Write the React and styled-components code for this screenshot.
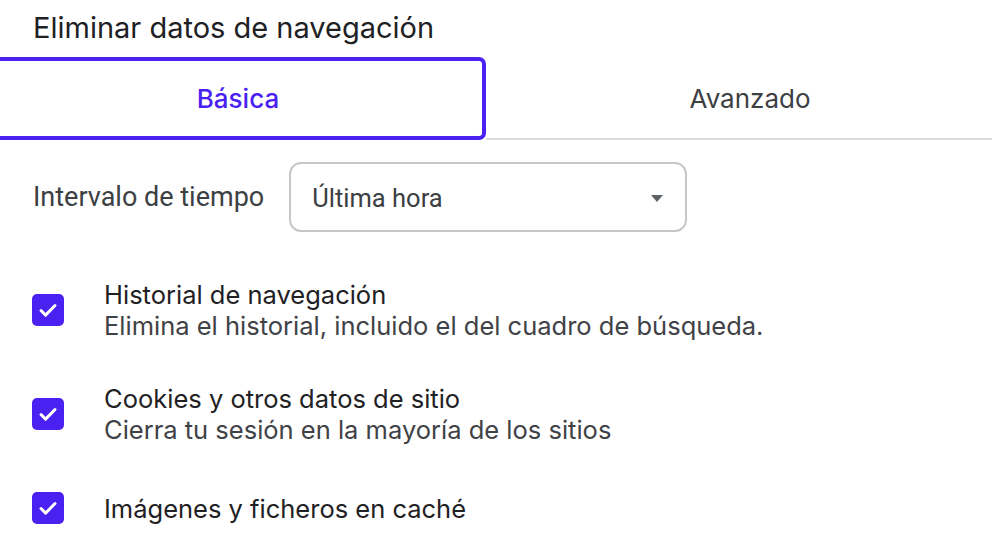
import React from "react";
import styled, { createGlobalStyle } from "styled-components";

const GlobalStyle = createGlobalStyle`
  html, body {
    margin: 0;
    padding: 0;
    background: #ffffff;
    overflow: hidden;
  }
  body {
    font-family: Inter, "Noto Sans", sans-serif;
    -webkit-font-smoothing: antialiased;
  }
`;

const Page = styled.div`
  width: 992px;
  height: 552px;
  overflow: hidden;
`;

const Title = styled.h1`
  margin: 0;
  padding: 10px 0 0 33px;
  font-size: 29px;
  line-height: 36px;
  font-weight: 400;
  color: #202124;
`;

const TabBar = styled.div`
  display: grid;
  grid-template-columns: 496px 528px;
  margin: 11px 0 0 -10px;
  height: 83px;
`;

const Tab = styled.div`
  display: flex;
  align-items: center;
  justify-content: center;
  box-sizing: border-box;
  font-size: 26px;
  line-height: 32px;
  font-weight: ${(p) => (p.active ? 500 : 400)};
  color: ${(p) => (p.active ? "#4a21f0" : "#3c4043")};
  border: ${(p) => (p.active ? "4px solid #4a21f0" : "none")};
  border-bottom: ${(p) =>
    p.active ? "4px solid #4a21f0" : "2px solid #dadce0"};
  border-radius: ${(p) => (p.active ? "7px" : "0")};
  padding-top: ${(p) => (p.active ? "0" : "2px")};
`;

const Body = styled.div`
  padding: 22px 0 0 33px;
`;

const RangeRow = styled.div`
  display: flex;
  align-items: center;
  gap: 25px;
`;

const RangeLabel = styled.span`
  font-family: Roboto, "Liberation Sans", sans-serif;
  font-size: 27px;
  color: #3c4043;
`;

const Select = styled.div`
  box-sizing: border-box;
  width: 398px;
  height: 70px;
  border: 2px solid #c7c7c7;
  border-radius: 12px;
  display: flex;
  align-items: center;
  justify-content: space-between;
  padding: 2px 20px 0 21px;
  font-family: Roboto, "Liberation Sans", sans-serif;
  font-size: 25.5px;
  color: #3c4043;
`;

const Arrow = styled.span`
  width: 0;
  height: 0;
  border-left: 6px solid transparent;
  border-right: 6px solid transparent;
  border-top: 7px solid #5f6368;
  margin-right: 2px;
`;

const List = styled.div`
  margin-top: 26px;
  display: flex;
  flex-direction: column;
`;

const Item = styled.div`
  display: flex;
  align-items: center;
  gap: 40px;
  min-height: ${(p) => (p.single ? "84px" : "auto")};
  padding: ${(p) => (p.single ? "0" : "21px 0")};
  box-sizing: border-box;
`;

const Box = styled.span`
  flex: none;
  width: 32px;
  height: 32px;
  border-radius: 5px;
  background: #4a21f0;
  display: flex;
  align-items: center;
  justify-content: center;
  margin-left: -1px;
`;

const Texts = styled.div`
  display: flex;
  flex-direction: column;
`;

const ItemTitle = styled.span`
  font-size: 25.5px;
  line-height: 31px;
  color: #1f2124;
`;

const ItemSub = styled.span`
  font-size: 25.5px;
  line-height: 31px;
  color: #3f4246;
`;

function Check() {
  return (
    <Box>
      <svg width="24" height="24" viewBox="0 0 24 24" fill="none">
        <path
          d="M5 12.5l4.6 4.6L19 7.5"
          stroke="#ffffff"
          strokeWidth="3"
          strokeLinecap="round"
          strokeLinejoin="round"
        />
      </svg>
    </Box>
  );
}

const items = [
  {
    title: "Historial de navegación",
    sub: "Elimina el historial, incluido el del cuadro de búsqueda.",
  },
  {
    title: "Cookies y otros datos de sitio",
    sub: "Cierra tu sesión en la mayoría de los sitios",
  },
  { title: "Imágenes y ficheros en caché" },
];

export default function App() {
  return (
    <Page>
      <GlobalStyle />
      <Title>Eliminar datos de navegación</Title>
      <TabBar>
        <Tab active>Básica</Tab>
        <Tab>Avanzado</Tab>
      </TabBar>
      <Body>
        <RangeRow>
          <RangeLabel>Intervalo de tiempo</RangeLabel>
          <Select>
            <span>Última hora</span>
            <Arrow />
          </Select>
        </RangeRow>
        <List>
          {items.map((it) => (
            <Item key={it.title} single={!it.sub}>
              <Check />
              <Texts>
                <ItemTitle>{it.title}</ItemTitle>
                {it.sub && <ItemSub>{it.sub}</ItemSub>}
              </Texts>
            </Item>
          ))}
        </List>
      </Body>
    </Page>
  );
}
